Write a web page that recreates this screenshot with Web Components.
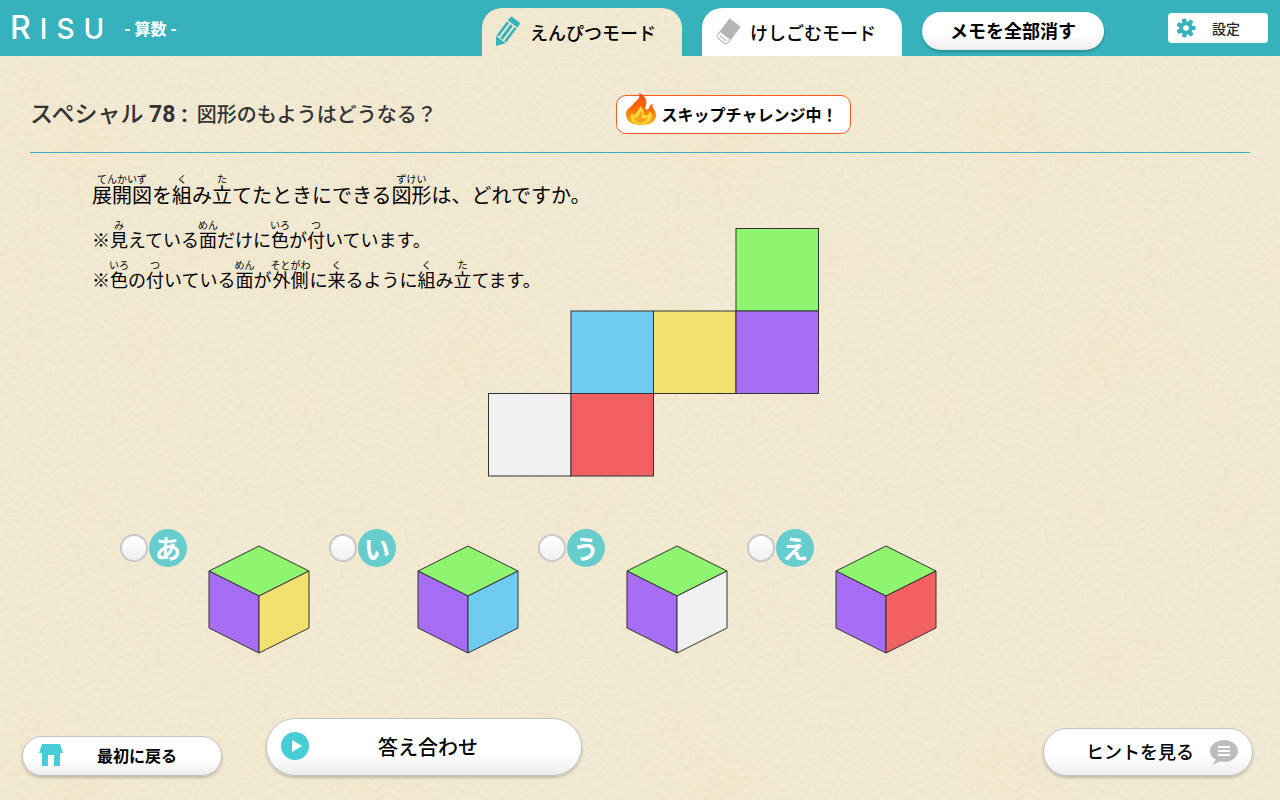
<!DOCTYPE html>
<html lang="ja">
<head>
<meta charset="utf-8">
<meta name="viewport" content="width=device-width, initial-scale=1">
<title>RISU 算数</title>
<style>
  :root {
    --teal: #37b1bb;
    --paper-color: #f3ebd6;
    --paper-grain: url("data:image/svg+xml,%3Csvg xmlns='http://www.w3.org/2000/svg' width='640' height='640'%3E%3Cfilter id='g' x='0' y='0' width='1' height='1'%3E%3CfeTurbulence type='fractalNoise' baseFrequency='.2 .3' numOctaves='3' seed='8' stitchTiles='stitch'/%3E%3CfeColorMatrix values='0 0 0 0 .74 0 0 0 0 .58 0 0 0 0 .34 .36 0 0 0 -.12'/%3E%3C/filter%3E%3Cfilter id='c' x='0' y='0' width='1' height='1'%3E%3CfeTurbulence type='fractalNoise' baseFrequency='.01' numOctaves='2' seed='3' stitchTiles='stitch'/%3E%3CfeColorMatrix values='0 0 0 0 .84 0 0 0 0 .7 0 0 0 0 .44 .3 0 0 0 -.1'/%3E%3C/filter%3E%3Crect width='640' height='640' filter='url(%23c)'/%3E%3Crect width='640' height='640' filter='url(%23g)'/%3E%3C/svg%3E");
  }
  body {
    margin: 0;
    background: var(--paper-color) var(--paper-grain) fixed;
    color: #000;
    font-family: Roboto, "Noto Sans CJK JP", sans-serif;
  }
</style>
</head>
<body>
<risu-app></risu-app>
<script>
class BaseElement extends HTMLElement {
  constructor() {
    super();
    this.attachShadow({ mode: "open" }).innerHTML = this.render();
  }
}

class RisuLogo extends BaseElement {
  render() {
    return `<style>
      :host { display: flex; align-items: baseline; gap: 9px; color: #fff; font-family: Inter, sans-serif; font-size: 28px; font-weight: 500; line-height: 32px; }
      .cap { font-size: 32px; }
    </style><span class="cap">R</span><span>I</span><span>S</span><span>U</span>`;
  }
}
customElements.define("risu-logo", RisuLogo);

class ModeTab extends BaseElement {
  render() {
    return `<style>
      :host { display: block; }
      button { display: flex; align-items: center; gap: 8px; width: 200px; height: 48px; padding: 0 0 0 12px; border: 0;
        border-radius: 20px 20px 0 0; background: #fff; color: #000; font: 500 18px "Noto Sans CJK JP", sans-serif; }
      :host([active]) button { background: var(--paper-color) var(--paper-grain) fixed; }
      ::slotted(svg) { width: 28px; height: 32px; flex: none; }
    </style><button type="button" role="tab" aria-selected="${this.hasAttribute("active")}"><slot name="icon"></slot><slot></slot></button>`;
  }
}
customElements.define("mode-tab", ModeTab);

class PillButton extends BaseElement {
  render() {
    return `<style>
      :host { display: block; --w: 200px; --h: 40px; --size: 16px; }
      :host([kind="memo"]) { --w: 182px; --h: 38px; --size: 18px; --edge: transparent; }
      :host([kind="answer"]) { --w: 316px; --h: 58px; --size: 20px; }
      :host([kind="hint"]) { --w: 210px; --h: 48px; --size: 18px; }
      button { display: grid; grid-template-columns: 28px 1fr 28px; align-items: center; width: var(--w); height: var(--h); padding: 0 14px 2px;
        border: 1px solid var(--edge, #c2c2c4); border-radius: 29px; background: linear-gradient(#fff 60%, #ececec) border-box;
        box-shadow: 0 2px 3px rgba(0,0,0,.2); color: #000; font: 500 var(--size) "Noto Sans CJK JP", sans-serif; }
      :host([kind="memo"]) button, :host([kind="back"]) button { font-weight: 700; }
      :host([kind="memo"]) button { grid-template-columns: 0 1fr 0; }
      .label { grid-column: 2; grid-row: 1; white-space: nowrap; }
      :host([kind="back"]) .label { padding-left: 30px; }
      :host([kind="answer"]) .label { padding-left: 8px; }
      :host([kind="hint"]) .label { justify-self: end; padding-right: 16px; }
      slot[name] { display: contents; }
      ::slotted(svg) { width: 28px; height: 28px; grid-row: 1; grid-column: 1; }
      :host([kind="hint"]) ::slotted(svg) { grid-column: 3; }
    </style><button type="button"><slot name="icon"></slot><span class="label"><slot></slot></span></button>`;
  }
}
customElements.define("pill-button", PillButton);

class SettingsButton extends BaseElement {
  render() {
    return `<style>
      :host { display: block; }
      button { display: flex; align-items: center; gap: 16px; width: 100px; height: 30px; padding: 0 8px; border: 0; border-radius: 4px;
        background: #fff; color: #222; font: 500 14px "Noto Sans CJK JP", sans-serif; }
      svg { width: 20px; height: 20px; }
    </style><button type="button"><svg viewBox="-10 -10 20 20" aria-hidden="true">
      <g fill="#37b1bb"><circle r="6.6"/>
      ${[0, 1, 2, 3, 4, 5, 6].map(i => `<rect x="-2.2" y="-9.6" width="4.4" height="5" rx="1.4" transform="rotate(${38 + i * 360 / 7})"/>`).join("")}</g>
      <circle r="2.8" fill="#fff"/></svg><slot></slot></button>`;
  }
}
customElements.define("settings-button", SettingsButton);

class AppHeader extends BaseElement {
  render() {
    return `<style>
      :host { display: flex; height: 56px; background: var(--teal); }
      .brand { flex: 1; display: flex; align-items: center; gap: 20px; padding-left: 10px; color: #fff; font-size: 16px; font-weight: 700; }
      nav { display: flex; align-items: flex-end; gap: 20px; }
      .memo { align-self: center; padding-top: 6px; }
      .end { width: 164px; display: flex; justify-content: flex-end; align-items: center; padding-right: 12px; }
    </style>
    <div class="brand"><risu-logo></risu-logo><span>- 算数 -</span></div>
    <nav role="tablist">
      <mode-tab active><svg slot="icon" viewBox="0 0 28 32" aria-hidden="true"><g transform="translate(2 30) rotate(37)" fill="#37b1bb">
        <path d="M0 0L-6-8H6Z"/><path d="M-6-9V-26H-3.400V-9ZM-1.500-9V-26H1.500V-9ZM3.400-9V-26H6V-9Z"/><path d="M-6-27.500V-31Q-6-33-4-33H4Q6-33 6-31V-27.500Z"/></g></svg>えんぴつモード</mode-tab>
      <mode-tab><svg slot="icon" viewBox="0 0 28 32" aria-hidden="true"><g transform="translate(14 16) rotate(37)">
        <path d="M-7-12H7V5H-7Z" fill="#b5b5b5"/><path d="M-6.500 5V9Q-6.500 11-4.500 11H4.500Q6.500 11 6.500 9V5" fill="#fff" stroke="#b5b5b5"/><path d="M-4 8H4" stroke="#b5b5b5"/></g></svg>けしごむモード</mode-tab>
      <pill-button class="memo" kind="memo">メモを全部消す</pill-button>
    </nav>
    <div class="end"><settings-button>設定</settings-button></div>`;
  }
}
customElements.define("app-header", AppHeader);

class SkipBadge extends BaseElement {
  render() {
    return `<style>
      :host { display: flex; align-items: center; gap: 5px; box-sizing: border-box; width: 235px; height: 39px; padding: 0 8px;
        border: 1px solid #ff5a1e; border-radius: 10px; background: #fff; font: 700 16px "Noto Sans CJK JP", sans-serif; white-space: nowrap; }
      svg { width: 32px; height: 34px; flex: none; margin-bottom: 8px; }
    </style><svg viewBox="0 0 32 34" aria-hidden="true">
      <defs><linearGradient id="f" x1="0" y1="0" x2="0" y2="1"><stop offset="0" stop-color="#fb4a0c"/><stop offset=".5" stop-color="#fd6d0a"/><stop offset="1" stop-color="#ffb818"/></linearGradient></defs>
      <path fill="url(#f)" d="M14 0C21 3 23 8 20 15C21 17 23 17 24 15C24 13 25 12 28 11C26 15 31 17 31 22C31 29 25 32 16 32C6 32 1 28 1 21C1 15 7 14 9 10C12 7 16 5 14 0Z"/>
      <path fill="#ffd83a" d="M15 13C19 16 19 19 19 22C22 23 24 21 25 18C30 25 24 31 16 31C7 31 3 26 7 20C8 22 9 22 10 22C11 18 15 17 15 13Z"/>
      <path fill="#fda41a" d="M15 18C16 21 12 23 12 25L9 24C9 27 11 29 15 30C20 30 22 27 23 23C21 25 19 26 17 25C18 22 17 20 15 18Z"/></svg><slot></slot>`;
  }
}
customElements.define("skip-badge", SkipBadge);

class ProblemTitle extends BaseElement {
  render() {
    return `<style>
      :host { display: grid; grid-template-columns: 12fr 13fr; align-items: center; height: 97px; margin: 0 30px; padding-top: 20px; box-sizing: border-box; border-bottom: 1px solid #37b1bb; color: #333; }
      h1 { margin: 0; display: flex; align-items: baseline; gap: 9px; font-size: 20px; font-weight: 500; white-space: nowrap; padding-bottom: 4px; }
      .no { font-size: 23px; font-weight: 500; }
      .no b { font-weight: 700; }
      skip-badge { color: #000; }
    </style>
    <h1><span class="no">スペシャル <b>78 :</b></span><span>図形のもようはどうなる？</span></h1>
    <skip-badge>スキップチャレンジ中！</skip-badge>`;
  }
}
customElements.define("problem-title", ProblemTitle);

class ProblemText extends BaseElement {
  render() {
    const r = (base, ruby) => `<ruby>${base}<rt>${ruby}</rt></ruby>`;
    return `<style>
      :host { display: block; padding-top: 7px; font-family: "Liberation Sans", "Noto Sans CJK JP", sans-serif; white-space: nowrap; }
      p { margin: 0; font-size: 18px; line-height: 38px; }
      .main { font-size: 20px; line-height: 48px; }
      ruby { ruby-align: center; }
      rt { font-size: 10px; line-height: 10px; }
    </style>
    <p class="main">${r("展開図", "てんかいず")}を${r("組", "く")}み${r("立", "た")}てたときにできる${r("図形", "ずけい")}は、どれですか。</p>
    <p>※${r("見", "み")}えている${r("面", "めん")}だけに${r("色", "いろ")}が${r("付", "つ")}いています。</p>
    <p>※${r("色", "いろ")}の${r("付", "つ")}いている${r("面", "めん")}が${r("外側", "そとがわ")}に${r("来", "く")}るように${r("組", "く")}み${r("立", "た")}てます。</p>`;
  }
}
customElements.define("problem-text", ProblemText);

class CubeNet extends BaseElement {
  render() {
    const s = 165, cells = [[3, 0, "#8ff46f"], [1, 1, "#70cbf3"], [2, 1, "#f2e06f"], [3, 1, "#a76df2"], [0, 2, "#f1f1f1"], [1, 2, "#f26161"]];
    return `<style>:host { display: block; } svg { display: block; width: 332px; height: 249px; }</style>
      <svg viewBox="0 0 664 498" role="img" aria-label="展開図"><g stroke="#333" stroke-width="2">
      ${cells.map(([x, y, c]) => `<rect x="${x * s + 1}" y="${y * s + 1}" width="${s}" height="${s}" fill="${c}"/>`).join("")}</g></svg>`;
  }
}
customElements.define("cube-net", CubeNet);

class CubeOption extends BaseElement {
  render() {
    const label = this.getAttribute("label");
    return `<style>
      :host { display: grid; grid-template-columns: 28px 38px 102px; column-gap: 1px; align-items: start; }
      label { grid-row: 1; grid-column: 1 / 3; display: flex; gap: 1px; align-items: center; height: 40px; }
      input { appearance: none; box-sizing: border-box; width: 28px; height: 28px; margin: 0; border: 2px solid #c9c9cb; border-radius: 50%; background: linear-gradient(#fff, #f0f0f0); }
      span { display: grid; place-items: center; width: 38px; height: 38px; border-radius: 50%; background: #66cccc; color: #fff; font: 700 26px/38px "Noto Sans CJK JP", sans-serif; }
      svg { grid-row: 1; grid-column: 3; width: 102px; height: 109px; margin: 17px 0 0 20px; }
    </style>
    <label><input type="radio" name="answer" value="${label}"><span>${label}</span></label>
    <svg viewBox="0 0 102 109" role="img" aria-label="立方体${label}"><g stroke="#333" stroke-linejoin="round">
      <path fill="#8ff46f" d="M51 1L101 26L51 51L1 26Z"/><path fill="#a76df2" d="M1 26L51 51V108L1 83Z"/>
      <path fill="${this.getAttribute("side")}" d="M51 51L101 26V83L51 108Z"/></g></svg>`;
  }
}
customElements.define("cube-option", CubeOption);

class RisuApp extends BaseElement {
  render() {
    return `<style>
      :host { display: flex; flex-direction: column; min-height: 100vh; }
      main { flex: 1; }
      .problem { display: grid; padding: 12px 0 0 92px; }
      .problem > * { grid-area: 1 / 1; }
      cube-net { margin: 63px 0 0 396px; }
      .options { display: grid; grid-template-columns: repeat(4, 209px); margin: 51px 0 0 120px; }
      footer { display: flex; align-items: flex-end; gap: 44px; padding: 0 27px 24px 22px; }
      .hint { margin-left: auto; }
    </style>
    <app-header></app-header>
    <main>
      <problem-title></problem-title>
      <section class="problem"><problem-text></problem-text><cube-net></cube-net></section>
      <section class="options" role="radiogroup" aria-label="答え">
        <cube-option label="あ" side="#f2e06f"></cube-option>
        <cube-option label="い" side="#70cbf3"></cube-option>
        <cube-option label="う" side="#f1f1f1"></cube-option>
        <cube-option label="え" side="#f26161"></cube-option>
      </section>
    </main>
    <footer>
      <pill-button kind="back"><svg slot="icon" viewBox="0 0 28 28" aria-hidden="true"><path fill="#46cdd6" d="M5 3H23L26 12H23V25H17V14H11V25H5V12H2Z"/></svg>最初に戻る</pill-button>
      <pill-button kind="answer"><svg slot="icon" viewBox="0 0 28 28" aria-hidden="true"><circle cx="14" cy="14" r="14" fill="#46cdd6"/><path fill="#fff" d="M11 8L21 14L11 20Z"/></svg>答え合わせ</pill-button>
      <pill-button class="hint" kind="hint"><svg slot="icon" viewBox="0 0 28 28" aria-hidden="true"><path fill="#bdbdbd" d="M14 3C22 3 28 8 28 14S22 25 14 25L10 24.500L2 28L6 22.500C2 21 0 18 0 14C0 8 6 3 14 3Z"/><path stroke="#fff" stroke-width="2" d="M8 10H20M8 14H20M8 18H20"/></svg>ヒントを見る</pill-button>
    </footer>`;
  }
}
customElements.define("risu-app", RisuApp);
</script>
</body>
</html>
